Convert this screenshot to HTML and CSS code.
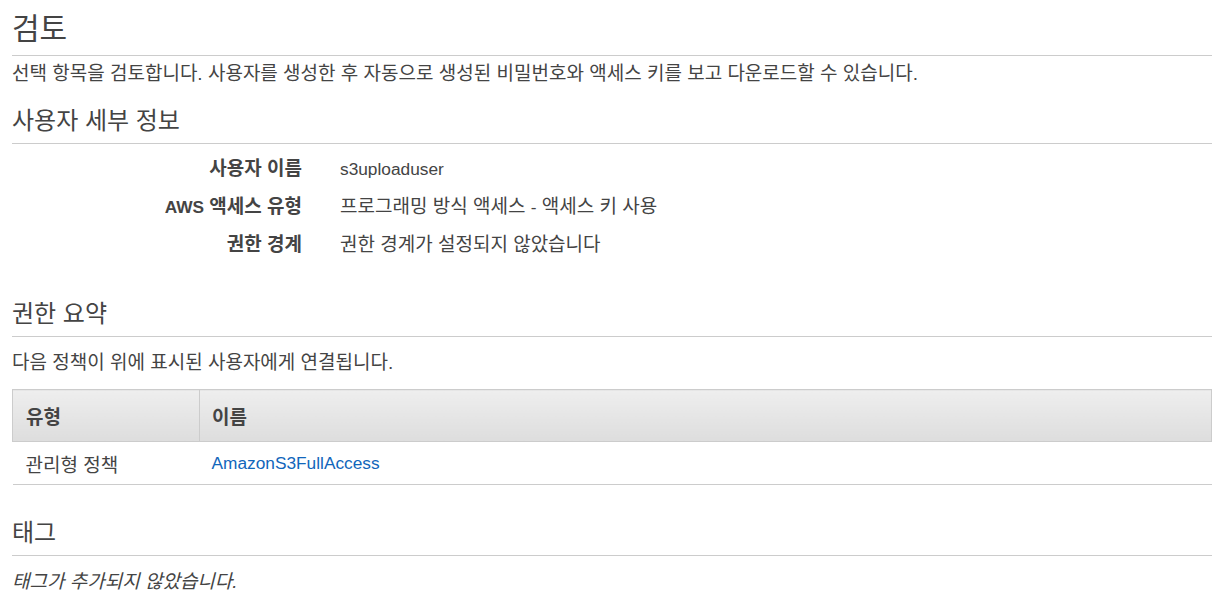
FILE: index.html
```html
<!DOCTYPE html>
<html lang="ko">
<head>
<meta charset="utf-8">
<link rel="stylesheet" href="styles.css">
</head>
<body>
<div class="page">
  <h1 class="title">검토</h1>
  <p class="desc">선택 항목을 검토합니다. 사용자를 생성한 후 자동으로 생성된 비밀번호와 액세스 키를 보고 다운로드할 수 있습니다.</p>

  <h2 class="section">사용자 세부 정보</h2>
  <div class="details">
    <div class="label">사용자 이름</div><div class="value"><span class="en">s3uploaduser</span></div>
    <div class="label"><span class="en">AWS</span> 액세스 유형</div><div class="value">프로그래밍 방식 액세스 <span class="en">-</span> 액세스 키 사용</div>
    <div class="label">권한 경계</div><div class="value">권한 경계가 설정되지 않았습니다</div>
  </div>

  <h2 class="section perm">권한 요약</h2>
  <p class="desc sub">다음 정책이 위에 표시된 사용자에게 연결됩니다.</p>
  <table class="tbl">
    <thead>
      <tr><th class="c1">유형</th><th>이름</th></tr>
    </thead>
    <tbody>
      <tr><td class="c1">관리형 정책</td><td><a class="link en" href="#">AmazonS3FullAccess</a></td></tr>
    </tbody>
  </table>

  <h2 class="section tags">태그</h2>
  <p class="desc sub italic">태그가 추가되지 않았습니다.</p>
</div>
</body>
</html>
```

FILE: styles.css
```css
html, body {
  margin: 0;
  padding: 0;
  background: #fff;
}
body {
  font-family: "Liberation Sans", "Noto Sans CJK KR", sans-serif;
  color: #444;
}
.page {
  padding: 0 14px 0 12px;
}
.en {
  font-size: 17.3px;
  line-height: 1;
}
.title {
  margin: 0;
  padding-top: 10px;
  font-size: 30px;
  font-weight: normal;
  line-height: 38px;
  height: 45px;
  border-bottom: 1px solid #ccc;
}
.desc {
  margin: 0;
  font-size: 19px;
  line-height: 36px;
  height: 36px;
}
.desc.sub {
  padding-top: 8px;
}
.section {
  margin: 0;
  font-size: 24px;
  font-weight: normal;
  line-height: 34px;
  height: 34px;
  padding: 12px 0 5px;
  border-bottom: 1px solid #ccc;
}
.details {
  display: grid;
  grid-template-columns: 290px 1fr;
  grid-auto-rows: 38px;
  column-gap: 38px;
  padding-top: 6px;
  font-size: 19px;
  line-height: 38px;
}
.label {
  text-align: right;
  font-weight: bold;
}
.perm {
  margin-top: 21px;
}
.tbl {
  width: 100%;
  border-collapse: collapse;
  font-size: 19px;
  margin-top: 8px;
}
.tbl th {
  text-align: left;
  font-weight: bold;
  height: 51px;
  padding: 0 12px;
  background: linear-gradient(#eeeeee, #dddddd);
  border: 1px solid #ccc;
}
.tbl td {
  height: 42px;
  padding: 0 12px;
  border-bottom: 1px solid #ccc;
}
.tbl .c1 {
  width: 161px;
  padding-left: 13px;
}
.link {
  color: #1166bb;
  text-decoration: none;
}
.tags {
  margin-top: 19px;
}
.italic {
  font-style: italic;
}
```
